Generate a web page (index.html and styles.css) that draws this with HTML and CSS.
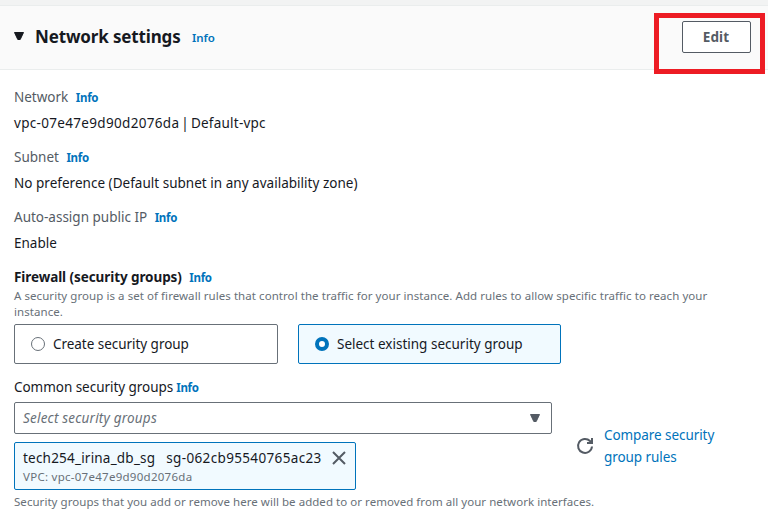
FILE: index.html
```
<!DOCTYPE html>
<html lang="en">
<head>
<meta charset="utf-8">
<title>Network settings</title>
<link rel="stylesheet" href="styles.css">
</head>
<body>
<section class="panel">
  <header class="panel-header">
    <svg class="caret" width="10" height="8" viewBox="0 0 10 8"><path d="M.5.5h9L6.2 7.5H3.8z" fill="#16191f" stroke="#16191f" stroke-linejoin="round"/></svg>
    <h2 class="title">Network settings</h2>
    <a class="info info-title">Info</a>
    <div class="highlight"><button class="edit">Edit</button></div>
  </header>
  <div class="content">
    <div class="field">
      <div class="label"><span class="t-network">Network</span><a class="info">Info</a></div>
      <div class="value"><span class="t-vpc">vpc-07e47e9d90d2076da</span><span class="t-vpcname"> | Default-vpc</span></div>
    </div>
    <div class="field">
      <div class="label"><span class="t-subnet">Subnet</span><a class="info">Info</a></div>
      <div class="value"><span class="t-pref">No preference (Default subnet in any availability zone)</span></div>
    </div>
    <div class="field">
      <div class="label"><span class="t-auto">Auto-assign public IP</span><a class="info">Info</a></div>
      <div class="value"><span class="t-enable">Enable</span></div>
    </div>
    <div class="firewall">
      <div class="label strong"><span class="t-firewall">Firewall (security groups)</span><a class="info">Info</a></div>
      <p class="hint"><span class="t-hint">A security group is a set of firewall rules that control the traffic for your instance. Add rules to allow specific traffic to reach your</span><br><span class="t-instance">instance.</span></p>
      <div class="tiles">
        <div class="tile"><i class="radio"></i><span class="t-create">Create security group</span></div>
        <div class="tile selected"><i class="radio"></i><span class="t-select">Select existing security group</span></div>
      </div>
    </div>
    <div class="label dark"><span class="t-common">Common security groups</span><a class="info info-near">Info</a></div>
    <div class="groups">
      <div class="picker">
        <div class="select"><span class="t-placeholder">Select security groups</span>
          <svg width="10" height="8" viewBox="0 0 10 8"><path d="M.5.5h9L6.2 7.5H3.8z" fill="#545b64" stroke="#545b64" stroke-linejoin="round"/></svg>
        </div>
        <div class="token">
          <div class="token-main"><span class="t-tech">tech254_irina_db_sg</span><span class="t-sg">sg-062cb95540765ac23</span>
            <svg width="14" height="14" viewBox="0 0 14 14"><path d="M1 1l12 12M13 1L1 13" stroke="#545b64" stroke-width="2"/></svg>
          </div>
          <div class="token-sub"><span class="t-tokenvpc">VPC: vpc-07e47e9d90d2076da</span></div>
        </div>
      </div>
      <div class="side">
        <svg width="18" height="18" viewBox="0 0 18 18" fill="none" stroke="#545b64" stroke-width="2"><path d="M16 9.5a7 7 0 1 1-2-5.5L15.5 5.5M16 1v5h-5"/></svg>
        <a class="compare"><span class="t-compare">Compare security</span><br><span class="t-rules">group rules</span></a>
      </div>
    </div>
    <p class="hint footer"><span class="t-footer">Security groups that you add or remove here will be added to or removed from all your network interfaces.</span></p>
  </div>
</section>
</body>
</html>
```
FILE: styles.css
```
* { box-sizing: border-box; }
body { margin: 0; height: 527px; overflow: hidden; background: #fff; border-top: 5px solid #f2f3f3; font: 13.5px/22px "Noto Sans", sans-serif; color: #16191f; white-space: nowrap; }
p, h2 { margin: 0; }
.panel-header { height: 65px; display: flex; align-items: center; padding: 0 3px 0 14px; background: #fafafa; border-top: 1px solid #eaeded; border-bottom: 1px solid #eaeded; }
.caret { margin: -4px 11px 0 0; }
.title { width: 146px; font-size: 17px; line-height: 24px; font-weight: 700; letter-spacing: -.15px; margin-top: -2px; }
.info { color: #0073bb; font-size: 11.5px; font-weight: 700; letter-spacing: -.3px; margin: 2px 0 0 7.5px; }
.info-title { margin: 0 0 0 11px; font-weight: 600; letter-spacing: 0; }
.info-near { margin-left: 3px; }
.highlight { width: 111px; height: 61px; margin: 11px 0 0 auto; border: 5px solid #ed1c24; padding: 3px 0 0 23px; }
.edit { display: block; width: 69px; height: 32px; border: 1px solid #545b64; border-radius: 2px; background: #fff; color: #545b64; font: 700 13.5px/20px "Noto Sans", sans-serif; letter-spacing: .1px; padding: 0 1px 0 0; }
.content { padding: 16px 14px 0; }
.field { height: 60px; }
.label { height: 22px; display: flex; align-items: center; color: #545b64; }
.value { height: 22px; margin-top: 4px; }
.strong { color: #16191f; font-weight: 700; }
.dark { color: #16191f; }
.hint { color: #687078; font-size: 11.5px; line-height: 16px; }
.tiles { display: flex; gap: 20px; margin-top: 4px; }
.tile { width: 264px; height: 40px; border: 1px solid #687078; border-radius: 2px; display: flex; align-items: center; padding-left: 16px; }
.selected { width: 263px; background: #f1faff; border-color: #0073bb; }
.radio { width: 14px; height: 14px; border: 1px solid #687078; border-radius: 50%; margin-right: 8px; }
.selected .radio { border: 4px solid #0073bb; background: #fff; }
.firewall { height: 110px; }
.groups { display: flex; margin-top: 4px; }
.picker { width: 538px; }
.select { height: 32px; border: 1px solid #687078; border-radius: 2px; display: flex; align-items: center; justify-content: space-between; padding: 0 11px 0 8px; color: #687078; font-style: italic; }
.token { width: 342px; height: 48px; margin-top: 8px; background: #f1faff; border: 1px solid #0073bb; border-radius: 2px; padding: 4px 9px 0 8px; }
.token-main { display: flex; align-items: center; height: 22px; }
.t-sg { margin-left: 11px; }
.token-main svg { margin-left: auto; }
.token-sub { color: #687078; font-size: 11.5px; line-height: 16px; }
.side { display: flex; margin: 22px 0 0 24px; }
.side svg { margin: 13px 10px 0 0; }
.compare { color: #0073bb; }
.footer { margin-top: 4px; }
.t-vpc { letter-spacing: .32px; }
.t-vpcname { letter-spacing: .23px; word-spacing: -1.8px; }
.t-pref { letter-spacing: .02px; }
.t-firewall { letter-spacing: -.08px; }
.t-common { letter-spacing: -.04px; }
.t-create { letter-spacing: -.04px; }
.t-hint, .t-instance { letter-spacing: .06px; }
.t-placeholder { letter-spacing: .2px; }
.t-tech { letter-spacing: .21px; }
.t-sg { letter-spacing: .35px; }
.t-tokenvpc { letter-spacing: .27px; }
.t-footer { letter-spacing: .045px; }
.t-compare, .t-rules { letter-spacing: -.07px; }
```
